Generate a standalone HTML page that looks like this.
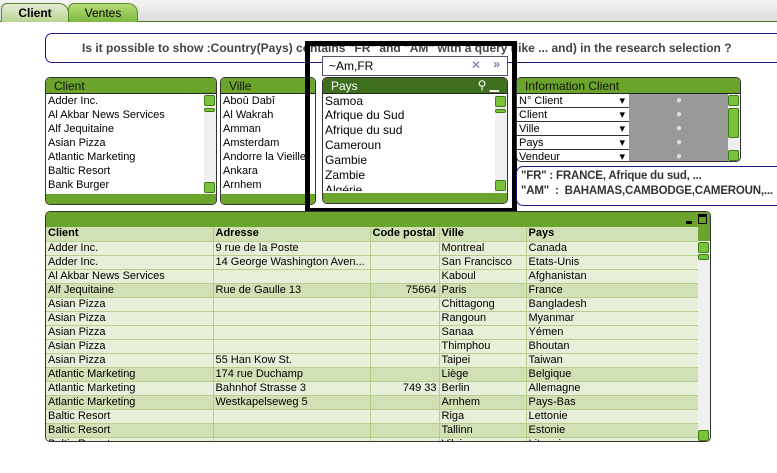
<!DOCTYPE html><html><head><meta charset="utf-8"><style>
*{box-sizing:border-box;margin:0;padding:0}
body{width:777px;height:473px;background:#fff;font-family:"Liberation Sans",sans-serif;font-size:11px;position:relative;overflow:hidden}
.abs{position:absolute}
.tabbar{left:0;top:0;width:777px;height:22px;background:linear-gradient(#f4f4f4,#dcdcdc);border-bottom:1px solid #4a7a1c}
.tab{top:3px;height:19px;border:1px solid #5a8a22;border-bottom:none;border-radius:6px 10px 0 0;font-size:12px;padding:2px 0 0 0;text-align:center}
.box{border:1px solid #333;border-radius:5px;background:#fff;overflow:hidden}
.hdr{height:16px;background:#6ba42b;color:#111;font-size:12px;padding:1px 0 0 8px;border-bottom:1px solid #222}
.li{height:14px;line-height:14px;padding-left:2px;white-space:nowrap;overflow:hidden}
.sbv{width:12px;background:#f0f0f0}
.btn{width:11px;height:11px;background:#7ac33a;border:1px solid #3d7a12;border-radius:2px}
.hsb{height:10px;background:#6ba42b}
table{border-collapse:collapse;font-size:11px}
td{height:14px;padding:0 2px;border-right:1px solid #b7cf8e;border-bottom:1px solid #b7cf8e;white-space:nowrap;overflow:hidden;line-height:13px}
tr.l td{background:#e7efd8}tr.d td{background:#d2e1b5}
tr.h td{background:#d2e1b5;font-weight:bold}
</style></head><body>
<div class="abs tabbar"></div>
<div class="abs tab" style="left:1px;width:68px;background:linear-gradient(#e4ecd8,#b9d48f);font-weight:bold">Client</div>
<div class="abs tab" style="left:68px;width:70px;background:linear-gradient(#b5dc79,#7db83e)">Ventes</div>

<div class="abs" style="left:45px;top:33px;width:740px;height:30px;border:1px solid #1b1b8a;border-radius:7px;font-weight:bold;font-size:12px;color:#444;padding:7px 0 0 36px">Is it possible to show :Country(Pays) contains "FR" and "AM" with a query (like ... and) in the research selection ?</div>

<!-- Client -->
<div class="abs box" style="left:45px;top:77px;width:172px;height:128px">
<div class="hdr">Client</div>
<div class="li">Adder Inc.</div><div class="li">Al Akbar News Services</div><div class="li">Alf Jequitaine</div><div class="li">Asian Pizza</div><div class="li">Atlantic Marketing</div><div class="li">Baltic Resort</div><div class="li">Bank Burger</div>
<div class="abs sbv" style="right:0;top:16px;height:101px"><div class="btn" style="margin-top:1px"></div><div class="btn" style="height:4px;margin-top:2px"></div><div class="btn" style="position:absolute;bottom:2px"></div></div>
<div class="abs hsb" style="left:0;bottom:0;width:170px"></div>
</div>
<!-- Ville -->
<div class="abs box" style="left:220px;top:77px;width:96px;height:128px">
<div class="hdr">Ville</div>
<div class="li">Aboû Dabî</div><div class="li">Al Wakrah</div><div class="li">Amman</div><div class="li">Amsterdam</div><div class="li">Andorre la Vieille</div><div class="li">Ankara</div><div class="li">Arnhem</div>
<div class="abs hsb" style="left:0;bottom:0;width:94px"></div>
</div>

<!-- black frame -->
<div class="abs" style="left:305px;top:41px;width:212px;height:172px;border:5px solid #000"></div>
<div class="abs" style="left:322px;top:56px;width:186px;height:20px;border:1px solid #556;background:#fff;font-size:12px;padding:2px 0 0 6px">~Am,FR<span style="position:absolute;right:26px;top:1px;color:#6a80a0">✕</span><span style="position:absolute;right:7px;top:0;color:#6a80a0;font-weight:bold">»</span></div>
<div class="abs box" style="left:322px;top:77px;width:186px;height:127px">
<div class="hdr" style="background:#3d6f1c;color:#fff">Pays<span style="position:absolute;right:8px;top:0">⚲ ▁</span></div>
<div class="li" style="font-size:12px">Samoa</div><div class="li" style="font-size:12px;height:15px">Afrique du Sud</div><div class="li" style="font-size:12px;height:15px">Afrique du sud</div><div class="li" style="font-size:12px;height:15px">Cameroun</div><div class="li" style="font-size:12px;height:15px">Gambie</div><div class="li" style="font-size:12px;height:15px">Zambie</div><div class="li" style="font-size:12px;height:8px">Algérie</div>
<div class="abs sbv" style="right:0;top:17px;height:98px"><div class="btn" style="margin-top:1px"></div><div class="btn" style="height:4px;margin-top:2px"></div><div class="btn" style="position:absolute;bottom:2px"></div></div>
<div class="abs hsb" style="left:0;bottom:0;width:184px"></div>
</div>

<!-- Info client -->
<div class="abs box" style="left:516px;top:77px;width:225px;height:85px">
<div class="hdr">Information Client</div>
<div class="abs" style="left:0;top:16px;width:112px">
<div class="li" style="border-bottom:1px solid #333">N° Client<span style="float:right;margin-right:4px">▾</span></div><div class="li" style="border-bottom:1px solid #333">Client<span style="float:right;margin-right:4px">▾</span></div><div class="li" style="border-bottom:1px solid #333">Ville<span style="float:right;margin-right:4px">▾</span></div><div class="li" style="border-bottom:1px solid #333">Pays<span style="float:right;margin-right:4px">▾</span></div><div class="li">Vendeur<span style="float:right;margin-right:4px">▾</span></div></div>
<div class="abs" style="left:112px;top:16px;width:100px;height:68px;background:#999;color:#ddd;text-align:center;line-height:14px;font-size:10px">●<br>●<br>●<br>●<br>●</div>
<div class="abs sbv" style="right:0;top:16px;height:68px"><div class="btn" style="margin-top:1px"></div><div class="btn" style="height:30px;margin-top:2px"></div><div class="btn" style="position:absolute;bottom:1px"></div></div>
</div>
<div class="abs" style="left:516px;top:166px;width:280px;height:40px;border:1px solid #1b1b8a;border-radius:7px;font-weight:bold;font-size:11.5px;color:#333;padding:2px 0 0 4px;line-height:15px;white-space:nowrap;letter-spacing:-0.2px">"FR" : FRANCE, Afrique du sud, ...<br>"AM" &nbsp;: &nbsp;BAHAMAS,CAMBODGE,CAMEROUN,...</div>

<!-- Table -->
<div class="abs" style="left:45px;top:211px;width:666px;height:231px;border:1px solid #333;border-radius:5px;overflow:hidden;background:#fff">
<div style="height:15px;background:#6ba42b"><span style="position:absolute;right:3px;top:2px;width:9px;height:10px;border:1px solid #000;border-top:3px solid #000"></span><span style="position:absolute;right:18px;top:9px;width:6px;height:3px;background:#000"></span></div>
<table style="width:652px;table-layout:fixed">
<colgroup><col style="width:167px"><col style="width:157px"><col style="width:69px"><col style="width:87px"><col style="width:172px"></colgroup>
<tr class="h"><td>Client</td><td>Adresse</td><td>Code postal</td><td>Ville</td><td>Pays</td></tr>
<tr class="l"><td>Adder Inc.</td><td>9 rue de la Poste</td><td></td><td>Montreal</td><td>Canada</td></tr>
<tr class="l"><td>Adder Inc.</td><td>14 George Washington Aven...</td><td></td><td>San Francisco</td><td>Etats-Unis</td></tr>
<tr class="l"><td>Al Akbar News Services</td><td></td><td></td><td>Kaboul</td><td>Afghanistan</td></tr>
<tr class="d"><td>Alf Jequitaine</td><td>Rue de Gaulle 13</td><td style="text-align:right">75664</td><td>Paris</td><td>France</td></tr>
<tr class="l"><td>Asian Pizza</td><td></td><td></td><td>Chittagong</td><td>Bangladesh</td></tr>
<tr class="l"><td>Asian Pizza</td><td></td><td></td><td>Rangoun</td><td>Myanmar</td></tr>
<tr class="l"><td>Asian Pizza</td><td></td><td></td><td>Sanaa</td><td>Yémen</td></tr>
<tr class="l"><td>Asian Pizza</td><td></td><td></td><td>Thimphou</td><td>Bhoutan</td></tr>
<tr class="l"><td>Asian Pizza</td><td>55 Han Kow St.</td><td></td><td>Taipei</td><td>Taiwan</td></tr>
<tr class="d"><td>Atlantic Marketing</td><td>174 rue Duchamp</td><td></td><td>Liège</td><td>Belgique</td></tr>
<tr class="l"><td>Atlantic Marketing</td><td>Bahnhof Strasse 3</td><td style="text-align:right">749 33</td><td>Berlin</td><td>Allemagne</td></tr>
<tr class="d"><td>Atlantic Marketing</td><td>Westkapelseweg 5</td><td></td><td>Arnhem</td><td>Pays-Bas</td></tr>
<tr class="l"><td>Baltic Resort</td><td></td><td></td><td>Riga</td><td>Lettonie</td></tr>
<tr class="d"><td>Baltic Resort</td><td></td><td></td><td>Tallinn</td><td>Estonie</td></tr>
<tr class="l"><td>Baltic Resort</td><td></td><td></td><td>Vilnius</td><td>Lituanie</td></tr>
</table>
<div class="abs" style="right:0;top:15px;width:12px;height:14px;background:#6ba42b"></div>
<div class="abs sbv" style="right:0;top:29px;width:12px;height:201px"><div class="btn" style="margin-top:1px"></div><div class="btn" style="height:6px;margin-top:1px"></div><div class="btn" style="position:absolute;bottom:1px"></div></div>
</div>
</body></html>
